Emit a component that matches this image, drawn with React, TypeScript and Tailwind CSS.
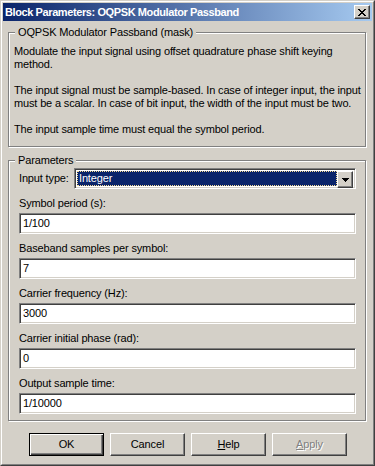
import type { ReactNode } from 'react';

const FIELDS = [
  { label: 'Symbol period (s):', value: '1/100' },
  { label: 'Baseband samples per symbol:', value: '7' },
  { label: 'Carrier frequency (Hz):', value: '3000' },
  { label: 'Carrier initial phase (rad):', value: '0' },
  { label: 'Output sample time:', value: '1/10000' },
];

const sunken =
  'border border-t-[#808080] border-l-[#808080] border-b-white border-r-white shadow-[inset_1px_1px_0_#404040,inset_-1px_-1px_0_#D4D0C8]';

function GroupBox({ title, className, children }: { title: string; className: string; children: ReactNode }) {
  return (
    <div className={`relative border border-[#808080] shadow-[inset_1px_1px_0_#fff,1px_1px_0_#fff] ${className}`}>
      <span className="absolute -top-[7px] left-[6px] bg-[#D4D0C8] px-[3px] leading-[13px]">{title}</span>
      {children}
    </div>
  );
}

function Button({ children, isDefault, disabled }: { children: ReactNode; isDefault?: boolean; disabled?: boolean }) {
  const edge = isDefault
    ? 'border border-black shadow-[inset_1px_1px_0_#fff,inset_-1px_-1px_0_#404040,inset_-2px_-2px_0_#808080]'
    : 'border border-t-white border-l-white border-b-[#404040] border-r-[#404040] shadow-[inset_-1px_-1px_0_#808080]';
  return (
    <button
      type="button"
      className={`flex h-[23px] w-[75px] items-center justify-center bg-[#D4D0C8] leading-[13px] ${edge} ${
        disabled ? 'text-[#808080] [text-shadow:1px_1px_0_#fff]' : 'text-black'
      }`}
    >
      {children}
    </button>
  );
}

export default function App() {
  return (
    <div className="h-[466px] w-[375px] bg-[#D4D0C8] font-['Liberation_Sans',Arial,sans-serif] text-[11px] tracking-[-0.15px] text-black">
      <div className="h-full w-full border border-t-[#D4D0C8] border-l-[#D4D0C8] border-b-[#404040] border-r-[#404040]">
        <div className="flex h-full w-full flex-col border border-t-white border-l-white border-b-[#808080] border-r-[#808080] p-px">
          {/* caption */}
          <div className="flex h-[18px] items-center justify-between bg-[linear-gradient(to_right,#0A246A,#A6CAF0)] pl-[2px] pr-[2px]">
            <span className="font-bold leading-[13px] tracking-[-0.4px] text-white">
              Block Parameters: OQPSK Modulator Passband
            </span>
            <div className="flex h-[14px] w-[16px] items-center justify-center border border-t-white border-l-white border-b-[#404040] border-r-[#404040] bg-[#D4D0C8] shadow-[inset_-1px_-1px_0_#808080]">
              <svg width="8" height="7" viewBox="0 0 8 7" shapeRendering="crispEdges">
                <path d="M0 0h2v1H0zM6 0h2v1H6zM1 1h2v1H1zM5 1h2v1H5zM2 2h4v1H2zM3 3h2v1H3zM2 4h4v1H2zM1 5h2v1H1zM5 5h2v1H5zM0 6h2v1H0zM6 6h2v1H6z" fill="#000" />
              </svg>
            </div>
          </div>

          <div className="flex flex-1 flex-col pl-[5px] pr-[6px]">
            <GroupBox title="OQPSK Modulator Passband (mask)" className="mt-[11px] pb-[10px] pl-[5px] pt-[12px]">
              <p className="whitespace-nowrap leading-[13px]">
                Modulate the input signal using offset quadrature phase shift keying
                <br />
                method.
                <br />
                <br />
                The input signal must be sample-based. In case of integer input, the input
                <br />
                must be a scalar. In case of bit input, the width of the input must be two.
                <br />
                <br />
                The input sample time must equal the symbol period.
              </p>
            </GroupBox>

            <GroupBox title="Parameters" className="mt-[13px] pb-[6px] pl-[10px] pr-[9px] pt-[7px]">
              <div className="flex h-[21px] items-center">
                <span className="w-[55px] leading-[13px]">Input type:</span>
                <div className={`flex h-[21px] flex-1 bg-white p-[2px] ${sunken}`}>
                  <div className="flex flex-1 items-center border border-dotted border-[#F5DB95] bg-[#0A246A] pl-[1px] leading-[13px] text-white">
                    Integer
                  </div>
                  <div className="flex h-[17px] w-[16px] items-center justify-center border border-t-white border-l-white border-b-[#404040] border-r-[#404040] bg-[#D4D0C8] shadow-[inset_-1px_-1px_0_#808080]">
                    <svg width="7" height="4" viewBox="0 0 7 4" shapeRendering="crispEdges">
                      <path d="M0 0h7v1H0zM1 1h5v1H1zM2 2h3v1H2zM3 3h1v1H3z" fill="#000" />
                    </svg>
                  </div>
                </div>
              </div>

              {FIELDS.map((f) => (
                <div key={f.label} className="mt-[8px]">
                  <div className="leading-[13px]">{f.label}</div>
                  <div className={`mt-[3px] flex h-[21px] items-center bg-white pl-[3px] leading-[13px] ${sunken}`}>
                    {f.value}
                  </div>
                </div>
              ))}
            </GroupBox>

            <div className="mt-[12px] flex gap-[6px] pl-[21px]">
              <Button isDefault>OK</Button>
              <Button>Cancel</Button>
              <Button>
                <span className="underline underline-offset-1">H</span>elp
              </Button>
              <Button disabled>
                <span className="underline underline-offset-1">A</span>pply
              </Button>
            </div>
          </div>
        </div>
      </div>
    </div>
  );
}
